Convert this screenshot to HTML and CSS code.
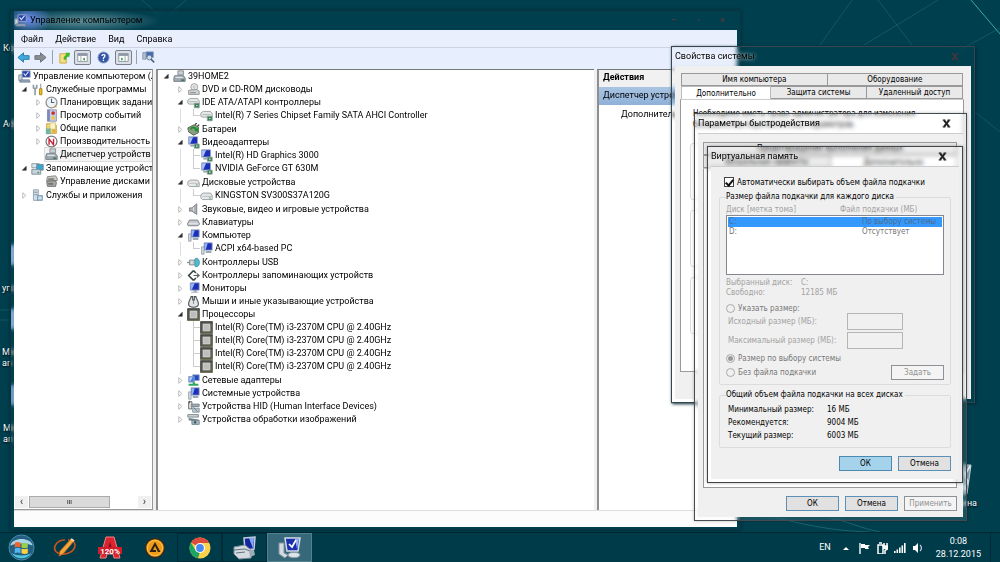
FILE: index.html
```html
<!DOCTYPE html>
<html lang="ru">
<head>
<meta charset="utf-8">
<title>Управление компьютером</title>
<link rel="stylesheet" href="styles.css">
</head>
<body>
<svg class="defs" aria-hidden="true">
  <defs>
    <symbol id="open" viewBox="0 0 8 8"><path d="M6 1.5V6H1.5z" fill="#333" stroke="#222" stroke-width=".6"/></symbol>
    <symbol id="shut" viewBox="0 0 8 8"><path d="M2 .8 5.6 4 2 7.2z" fill="#fff" stroke="#aaa" stroke-width=".9"/></symbol>
    <symbol id="monitor" viewBox="0 0 16 16"><path d="M4 1h11v9H4z" fill="#1c2fb8" stroke="#9aa7b5"/><path d="M4.500 1.500h5L6 9.500H4.500z" fill="#93b4f2"/><path d="M8 10h4v2H8z" fill="#8b98a3"/><path d="M5 12h9v1.500H5z" fill="#b9c3cc"/></symbol>
    <symbol id="video" viewBox="0 0 16 16"><path d="M2 1h11v9H2z" fill="#1c2fb8" stroke="#9aa7b5"/><path d="M2.500 1.500h5L4 9.500H2.500z" fill="#a9c3f5"/><path d="M4 11h6v2H4z" fill="#98a6b4"/><path d="M9 10h6v5H9z" fill="#357a50" stroke="#8aa796"/><path d="M11 11.500h2v2h-2z" fill="#bcd"/></symbol>
    <symbol id="pc" viewBox="0 0 16 16"><path d="M5 1h10v9H5z" fill="#1c2fb8" stroke="#9aa7b5"/><path d="M5.500 1.500h4L7 9.500H5.500z" fill="#93b4f2"/><path d="M2 6h3v9H2z" fill="#d9dfe6" stroke="#8896a5"/><path d="M7 11h7v2.500H7z" fill="#9aa8b5"/></symbol>
    <symbol id="mmc" viewBox="0 0 16 16"><path d="M5 1h10v8H5z" fill="#2440a8" stroke="#a4b2c4"/><path d="m7 4 2 3 4-5" fill="none" stroke="#dbe8ff" stroke-width="1.300"/><path d="M1 6h4v7H1z" fill="#c8d2dd" stroke="#74879b"/><path d="M3 12h11l1 3H2z" fill="#8fa3b8" stroke="#5e7186" stroke-width=".7"/></symbol>
    <symbol id="tools" viewBox="0 0 16 16"><path d="M3 2v4l2 1 2-1V2M5 7v8" fill="none" stroke="#9099a3" stroke-width="2"/><path d="M12 1v6" stroke="#999" stroke-width="1.300"/><path d="M10.500 7h3v7.500h-3z" fill="#f2c21c" stroke="#a87c10"/></symbol>
    <symbol id="clock" viewBox="0 0 16 16"><circle cx="8" cy="8" r="6.700" fill="#eef3f6" stroke="#929292" stroke-width="1.600"/><path d="M8 3.500V8h3.500" fill="none" stroke="#42658a" stroke-width="1.300"/><path d="m12 12 2 2" stroke="#c29534" stroke-width="1.500"/></symbol>
    <symbol id="event" viewBox="0 0 16 16"><path d="M3 1h11v14H3z" fill="#c6d0ec" stroke="#7d87ac"/><path d="M3 1h3v14H3z" fill="#7f89b6"/><circle cx="10" cy="5" r="2.300" fill="#d22e2e"/><path d="M8 9h4v4H8z" fill="#f1c53c"/></symbol>
    <symbol id="folder" viewBox="0 0 16 16"><path d="M2 2h5l1 2h6v10H2z" fill="#f3d77a" stroke="#c69f3c"/><path d="M6 1h7v8H6z" fill="#f8f3ca" stroke="#d1bd6c"/><path d="M1 8h6v7H1z" fill="#76b5a0"/><circle cx="11" cy="11" r="2.500" fill="#dfb148"/></symbol>
    <symbol id="perf" viewBox="0 0 16 16"><circle cx="8" cy="8" r="6.700" fill="#fff" stroke="#777" stroke-width="1.500"/><path d="M5 12V5l5.500 7V4.500" fill="none" stroke="#c5263d" stroke-width="1.700"/></symbol>
    <symbol id="devmgr" viewBox="0 0 16 16"><path d="M6 1h7v5H6z" fill="#c8ced4" stroke="#7b868f"/><path d="M2 7h11l2 3v4H1v-4z" fill="#9faab3" stroke="#69747e"/><path d="M3 9h9" stroke="#eef1f3" stroke-width="1.300"/><path d="M10 11.500h4v2h-4z" fill="#48775c"/></symbol>
    <symbol id="store" viewBox="0 0 16 16"><path d="M1 2h9v5H1z" fill="#dde4ea" stroke="#84919c"/><path d="M7 3h8v7H7z" fill="#38a6cf" stroke="#6b8190"/><path d="M1 9h9l2 2v4H1z" fill="#c6d2dc" stroke="#71828f"/><path d="M8 12h2v2H8z" fill="#37945d"/></symbol>
    <symbol id="diskmgr" viewBox="0 0 16 16"><path d="m3 2 10-1 2 3v3H2z" fill="#c9c9c6" stroke="#777"/><path d="m2 8 11-1 1 3-1 4H3z" fill="#a8a8a4" stroke="#666"/><path d="M4 5h7M4 11h6" stroke="#444" stroke-width="1.200"/></symbol>
    <symbol id="services" viewBox="0 0 16 16"><path d="M3 1h6v13H3z" fill="#d3dde7" stroke="#8899a9"/><path d="M4 4h4M4 7h4" stroke="#6f879c"/><path d="M8 8h6v6H8z" fill="#8fb8cf" stroke="#7797ae"/><path d="M9 10h4M9 12h4" stroke="#fff"/></symbol>
    <symbol id="dvd" viewBox="0 0 16 16"><circle cx="9" cy="5" r="4.300" fill="#e4e7ea" stroke="#999"/><circle cx="9" cy="5" r="1.200" fill="#fff" stroke="#888" stroke-width=".6"/><path d="m2 9 10-1 3 2v4H2z" fill="#d1d4d6" stroke="#888"/><path d="M4 12h7" stroke="#777"/></symbol>
    <symbol id="disk" viewBox="0 0 16 16"><path d="m1 7 3-2h9l2 3v5H3L1 11z" fill="#e5e7e8" stroke="#8d9295"/><path d="M3 9h12" stroke="#aaa" stroke-width=".8"/><path d="M11 11h2" stroke="#4aa04e" stroke-width="1.300"/></symbol>
    <symbol id="ide" viewBox="0 0 16 16"><path d="m1 5 3-2h9l2 3v4H3L1 9z" fill="#e5e9e8" stroke="#90989a"/><path d="M3 7h10" stroke="#aaa"/><path d="M9 9h6v5.500H9z" fill="#348052" stroke="#86a291"/><path d="M11 11h2v1.500h-2z" fill="#bad3c4"/></symbol>
    <symbol id="battery" viewBox="0 0 16 16"><path d="m1 6 8-4 5 3v7l-6 3-6-4z" fill="#8b9b80" stroke="#3f5b3f"/><path d="M4 6c2-2 7-2 8 1l2-1-1 5-4-2 1-1c-2-2-4-1-5 1z" fill="#18902c"/><path d="m10 2 2-2M13 4l2-2" stroke="#333" stroke-width="1.500"/></symbol>
    <symbol id="sound" viewBox="0 0 16 16"><path d="M3 6h3l6-5v13l-6-4H3z" fill="#aeb2b8" stroke="#6e747b"/><path d="M8 5v5" stroke="#e6e7e9"/></symbol>
    <symbol id="keyboard" viewBox="0 0 16 16"><path d="M3 5h10l2.500 5-2 2h-12L.5 10z" fill="#c7cace" stroke="#696f75"/><path d="M2 9.500h12" stroke="#eff1f2"/></symbol>
    <symbol id="usb" viewBox="0 0 16 16"><path d="M0 8h4" stroke="#888" stroke-width="1.500"/><path d="M3 5h7v6H3z" fill="#bcc6ca" stroke="#77858d"/><path d="M10 3h3c3 2 3 8 0 10h-3z" fill="#48bed2" stroke="#498e9c"/><path d="M6 6v4" stroke="#fff"/></symbol>
    <symbol id="ctrl" viewBox="0 0 16 16"><path d="m8 2-6 6 6 6M8 2l3 3M8 14l3-3" fill="none" stroke="#37433a" stroke-width="1.800"/><path d="M8 8h7M12 5.500 15 8l-3 2.500" fill="none" stroke="#5a665d" stroke-width="1.400"/></symbol>
    <symbol id="mouse" viewBox="0 0 16 16"><path d="M5 2c0 2-3 5-3 9s3 4 6 4 6 0 6-4-3-7-3-9H9v4H7V2z" fill="#e1e3e5" stroke="#4b5055" stroke-width="1.300"/><path d="M8 6v5" stroke="#777"/></symbol>
    <symbol id="cpu" viewBox="0 0 16 16"><path d="M1 1h14v14H1z" fill="#666960" stroke="#33362f" stroke-width="1.400"/><path d="M4 4h8v8H4z" fill="#bdbdbd" stroke="#e2e2e2"/><path d="M1 15h14V3" fill="none" stroke="#8a8460"/></symbol>
    <symbol id="net" viewBox="0 0 16 16"><path d="M7 1h8v7H7z" fill="#234bc4" stroke="#92a5bd"/><path d="M2 3h7v7H2z" fill="#4f7de2" stroke="#8ca0ba"/><path d="M3 4h4L4 9H3z" fill="#bcd2fa"/><path d="M7 10h3v2h4v2.500H2V12h5z" fill="#32a663"/></symbol>
    <symbol id="hid" viewBox="0 0 16 16"><path d="M2 2h4v9H2z" fill="#ddd" stroke="#54585c"/><path d="M3 1v3" stroke="#444"/><path d="M6 5h9v3H6z" fill="#9fabb4" stroke="#718089"/><path d="M7 10h8v5H7z" fill="#bdcad4" stroke="#7c8c98"/><path d="m8 9 5 5" stroke="#59656f"/></symbol>
    <symbol id="imaging" viewBox="0 0 16 16"><path d="M1 2h13v3H1z" fill="#d2d8da" stroke="#68757b"/><path d="m2 6 12 2v3L2 9z" fill="#6b8389"/><path d="M6 9h9v5H6z" fill="#adbcc4" stroke="#647984"/><circle cx="10" cy="11.500" r="1.600" fill="#435d6b"/></symbol>
    <symbol id="x" viewBox="0 0 10 10"><path d="M.8 1.300h3M6.200 1.300h3M.8 8.700h3M6.200 8.700h3" stroke="currentColor" stroke-width="1.300"/><path d="m2.300 1.500 5.400 7M7.700 1.500l-5.400 7" stroke="currentColor" stroke-width="2.200"/></symbol>
    <symbol id="start" viewBox="0 0 28 28"><circle cx="14" cy="14" r="13" fill="#235f83" stroke="#4d8fae"/><path d="M2.500 12C4 3 24 3 25.500 12 20 9 8 9 2.500 12z" fill="#a7d5e6"/><path d="M4 20c4 7 16 7 20 0-6 3-14 3-20 0z" fill="#4fc6dd"/><path d="M7 9c2-1 4-1 6 0v5c-2-1-4-1-6 0z" fill="#f0642d"/><path d="M14 9c2 1 4 1 6.500 0v5c-2 1-4 1-6.500 0z" fill="#98d048"/><path d="M7 15c2-1 4-1 6 0v5c-2-1-4-1-6 0z" fill="#53b6ef"/><path d="M14 15c2 1 4 1 6.500 0v5c-2 1-4 1-6.500 0z" fill="#ffd23e"/></symbol>
  </defs>
</svg>

<main class="desktop">
  <svg class="wallpaper" viewBox="0 0 1000 532" preserveAspectRatio="none" aria-hidden="true">
    <g fill="none" stroke="#2c7a84" stroke-width="1">
      <path d="M971 0 1000 34" stroke="#3aa8a8"/>
      <g opacity=".4"><path d="m852 0-32 45M878 0l34 45M938 0l-74 45M1000 28l-40 22M142 0l18 16M186 0l-14 12M975 112l25 20M0 310h10M0 320h10"/></g>
      <path d="M740 512c50 6 70 18 130 20M830 518c20 4 30 10 50 14" opacity=".6"/>
    </g>
  </svg>
  <div class="shortcut s1">Корзина</div>
  <div class="shortcut s2">Adobe</div>
  <div class="shortcut s3 pic">угол</div>
  <div class="shortcut s4 pic">Micro<br>an</div>
  <div class="shortcut s5 pic">Micro<br>an</div>
  <div class="bin">
    <svg viewBox="0 0 30 34"><path d="M2 3h25l-4 29H6z" fill="#7e9dab" stroke="#c3d3da"/><path d="m6 3 4 10 6-9 5 9 5-9M8 28l6-10 7 10M21 14l3 5-3 9" fill="none" stroke="#eaf2f5" stroke-width="1.600"/></svg>
    <span>Корзина</span>
  </div>

  <section class="window console">
    <header class="titlebar">
      <svg class="i"><use href="#mmc"/></svg><h1>Управление компьютером</h1>
      <div class="caption"><button aria-label="Свернуть">–</button><button aria-label="Развернуть">▫</button><button aria-label="Закрыть">×</button></div>
    </header>
    <div class="client">
      <nav class="menu"><button>Файл</button><button>Действие</button><button>Вид</button><button>Справка</button></nav>
      <div class="toolbar">
        <button aria-label="Назад"><svg viewBox="0 0 14 14"><path d="m1 7 6-5v3h6v4H7v3z" fill="#3fa9dc" stroke="#2379a9"/></svg></button>
        <button aria-label="Вперёд"><svg viewBox="0 0 14 14"><path d="M13 7 7 2v3H1v4h6v3z" fill="#8a8f94" stroke="#686d72"/></svg></button>
        <i class="sep"></i>
        <button aria-label="Вверх"><svg viewBox="0 0 14 14"><path d="M2 3h7v10H2z" fill="#f5df83" stroke="#cba944"/><path d="M6 9c0-3 1-4 3-5L8 2l5 0-1 5-1-1c-2 1-2 2-3 4z" fill="#45b52c"/></svg></button>
        <button class="on" aria-label="Дерево консоли"><svg viewBox="0 0 14 14"><path d="M1 2h12v10H1z" fill="#fff" stroke="#7d8894"/><path d="M1 2h12v3H1z" fill="#8d99a6"/><path d="M5 5v7" stroke="#8d99a6"/><path d="m10 7-3 2 3 2z" fill="#3b9c4b"/></svg></button>
        <button class="help" aria-label="Справка"><svg viewBox="0 0 14 14"><circle cx="7" cy="7" r="6" fill="#3356a8" stroke="#9aa9c8"/><text x="7" y="10.500" text-anchor="middle" class="q">?</text></svg></button>
        <button class="on" aria-label="Панель действий"><svg viewBox="0 0 14 14"><path d="M1 2h12v10H1z" fill="#fff" stroke="#7d8894"/><path d="M1 2h12v3H1z" fill="#8d99a6"/><path d="M9 5v7" stroke="#8d99a6"/><path d="m4 7 3 2-3 2z" fill="#3b9c4b"/></svg></button>
        <i class="sep"></i>
        <button aria-label="Обновить"><svg viewBox="0 0 16 16"><path d="M1 2h4v8H1z" fill="#b6c3d2" stroke="#7a8a9c"/><path d="M5 1h9v7H5z" fill="#4669ae" stroke="#8ea3bd"/><circle cx="9" cy="8" r="3" fill="#cfe0ee" stroke="#586e86"/><path d="m11 10 4 4" stroke="#54667a" stroke-width="2"/></svg></button>
      </div>
      <div class="panes">
        <div class="pane scope">
          <ul class="tree">
            <li class="row l0 bare"><svg class="i"><use href="#mmc"/></svg>Управление компьютером (локальным)</li>
            <li><div class="row l1"><svg class="t"><use href="#open"/></svg><svg class="i"><use href="#tools"/></svg>Служебные программы</div>
              <ul class="group">
                <li class="row l2"><svg class="t"><use href="#shut"/></svg><svg class="i"><use href="#clock"/></svg>Планировщик заданий</li>
                <li class="row l2"><svg class="t"><use href="#shut"/></svg><svg class="i"><use href="#event"/></svg>Просмотр событий</li>
                <li class="row l2"><svg class="t"><use href="#shut"/></svg><svg class="i"><use href="#folder"/></svg>Общие папки</li>
                <li class="row l2"><svg class="t"><use href="#shut"/></svg><svg class="i"><use href="#perf"/></svg>Производительность</li>
                <li class="row l2 bare selected"><svg class="i"><use href="#devmgr"/></svg>Диспетчер устройств</li>
              </ul></li>
            <li><div class="row l1"><svg class="t"><use href="#open"/></svg><svg class="i"><use href="#store"/></svg>Запоминающие устройства</div>
              <ul class="group"><li class="row l2 bare"><svg class="i"><use href="#diskmgr"/></svg>Управление дисками</li></ul></li>
            <li class="row l1"><svg class="t"><use href="#shut"/></svg><svg class="i"><use href="#services"/></svg>Службы и приложения</li>
          </ul>
          <div class="scroll"><button aria-label="Влево">‹</button><i class="thumb">III</i><button aria-label="Вправо">›</button></div>
        </div>
        <div class="pane devices">
          <ul class="tree">
            <li class="row l0"><svg class="t"><use href="#open"/></svg><svg class="i"><use href="#devmgr"/></svg>39HOME2</li>
            <li class="row l1"><svg class="t"><use href="#shut"/></svg><svg class="i"><use href="#dvd"/></svg>DVD и CD-ROM дисководы</li>
            <li><div class="row l1"><svg class="t"><use href="#open"/></svg><svg class="i"><use href="#ide"/></svg>IDE ATA/ATAPI контроллеры</div>
              <ul class="group"><li class="row l2"><svg class="i"><use href="#ide"/></svg>Intel(R) 7 Series Chipset Family SATA AHCI Controller</li></ul></li>
            <li class="row l1"><svg class="t"><use href="#shut"/></svg><svg class="i"><use href="#battery"/></svg>Батареи</li>
            <li><div class="row l1"><svg class="t"><use href="#open"/></svg><svg class="i"><use href="#video"/></svg>Видеоадаптеры</div>
              <ul class="group"><li class="row l2"><svg class="i"><use href="#video"/></svg>Intel(R) HD Graphics 3000</li><li class="row l2"><svg class="i"><use href="#video"/></svg>NVIDIA GeForce GT 630M</li></ul></li>
            <li><div class="row l1"><svg class="t"><use href="#open"/></svg><svg class="i"><use href="#disk"/></svg>Дисковые устройства</div>
              <ul class="group"><li class="row l2"><svg class="i"><use href="#disk"/></svg>KINGSTON SV300S37A120G</li></ul></li>
            <li class="row l1"><svg class="t"><use href="#shut"/></svg><svg class="i"><use href="#sound"/></svg>Звуковые, видео и игровые устройства</li>
            <li class="row l1"><svg class="t"><use href="#shut"/></svg><svg class="i"><use href="#keyboard"/></svg>Клавиатуры</li>
            <li><div class="row l1"><svg class="t"><use href="#open"/></svg><svg class="i"><use href="#pc"/></svg>Компьютер</div>
              <ul class="group"><li class="row l2"><svg class="i"><use href="#pc"/></svg>ACPI x64-based PC</li></ul></li>
            <li class="row l1"><svg class="t"><use href="#shut"/></svg><svg class="i"><use href="#usb"/></svg>Контроллеры USB</li>
            <li class="row l1"><svg class="t"><use href="#shut"/></svg><svg class="i"><use href="#ctrl"/></svg>Контроллеры запоминающих устройств</li>
            <li class="row l1"><svg class="t"><use href="#shut"/></svg><svg class="i"><use href="#monitor"/></svg>Мониторы</li>
            <li class="row l1"><svg class="t"><use href="#shut"/></svg><svg class="i"><use href="#mouse"/></svg>Мыши и иные указывающие устройства</li>
            <li><div class="row l1"><svg class="t"><use href="#open"/></svg><svg class="i"><use href="#cpu"/></svg>Процессоры</div>
              <ul class="group"><li class="row l2"><svg class="i"><use href="#cpu"/></svg>Intel(R) Core(TM) i3-2370M CPU @ 2.40GHz</li><li class="row l2"><svg class="i"><use href="#cpu"/></svg>Intel(R) Core(TM) i3-2370M CPU @ 2.40GHz</li><li class="row l2"><svg class="i"><use href="#cpu"/></svg>Intel(R) Core(TM) i3-2370M CPU @ 2.40GHz</li><li class="row l2"><svg class="i"><use href="#cpu"/></svg>Intel(R) Core(TM) i3-2370M CPU @ 2.40GHz</li></ul></li>
            <li class="row l1"><svg class="t"><use href="#shut"/></svg><svg class="i"><use href="#net"/></svg>Сетевые адаптеры</li>
            <li class="row l1"><svg class="t"><use href="#shut"/></svg><svg class="i"><use href="#pc"/></svg>Системные устройства</li>
            <li class="row l1"><svg class="t"><use href="#shut"/></svg><svg class="i"><use href="#hid"/></svg>Устройства HID (Human Interface Devices)</li>
            <li class="row l1"><svg class="t"><use href="#shut"/></svg><svg class="i"><use href="#imaging"/></svg>Устройства обработки изображений</li>
          </ul>
        </div>
        <div class="pane actions">
          <h2>Действия</h2>
          <h3>Диспетчер устройств</h3>
          <p>Дополнительные действия</p>
        </div>
      </div>
      <footer class="status"></footer>
    </div>
  </section>

  <section class="window dialog system">
    <header class="titlebar"><h1>Свойства системы</h1><button class="close" aria-label="Закрыть"><svg><use href="#x"/></svg></button></header>
    <div class="body">
      <div class="tabs back"><button>Имя компьютера</button><button>Оборудование</button></div>
      <div class="tabs front"><button class="current">Дополнительно</button><button>Защита системы</button><button>Удаленный доступ</button></div>
      <div class="sheet">
        <p>Необходимо иметь права администратора для изменения большинства перечисленных параметров.</p>
        <div class="box"></div><div class="box"></div><div class="box"></div>
      </div>
    </div>
  </section>

  <section class="window dialog perf">
    <header class="titlebar"><h1>Параметры быстродействия</h1><button class="close" aria-label="Закрыть"><svg><use href="#x"/></svg></button></header>
    <div class="body">
      <div class="tabs back"><button>Предотвращение выполнения данных</button></div>
      <div class="tabs front"><button>Визуальные эффекты</button><button class="current">Дополнительно</button></div>
      <div class="sheet"></div>
      <div class="buttons"><button class="btn">ОК</button><button class="btn">Отмена</button><button class="btn" disabled>Применить</button></div>
    </div>
  </section>

  <section class="window dialog memory">
    <header class="titlebar"><h1>Виртуальная память</h1><button class="close" aria-label="Закрыть"><svg><use href="#x"/></svg></button></header>
    <form class="body">
      <label class="check"><input type="checkbox" checked>Автоматически выбирать объем файла подкачки</label>
      <fieldset>
        <legend>Размер файла подкачки для каждого диска</legend>
        <table class="drives">
          <thead><tr><th>Диск [метка тома]</th><th>Файл подкачки (МБ)</th></tr></thead>
          <tbody><tr class="picked"><td>C:</td><td>По выбору системы</td></tr><tr><td>D:</td><td>Отсутствует</td></tr></tbody>
        </table>
        <dl class="info"><dt>Выбранный диск:</dt><dd>C:</dd><dt>Свободно:</dt><dd>12185 МБ</dd></dl>
        <label class="radio"><input type="radio" name="size" disabled>Указать размер:</label>
        <div class="sizes">
          <label for="min">Исходный размер (МБ):</label><input id="min" type="text" disabled>
          <label for="max">Максимальный размер (МБ):</label><input id="max" type="text" disabled>
        </div>
        <label class="radio"><input type="radio" name="size" checked disabled>Размер по выбору системы</label>
        <div class="last"><label class="radio"><input type="radio" name="size" disabled>Без файла подкачки</label><button type="button" class="btn" disabled>Задать</button></div>
      </fieldset>
      <fieldset class="totals">
        <legend>Общий объем файла подкачки на всех дисках</legend>
        <dl><dt>Минимальный размер:</dt><dd>16 МБ</dd><dt>Рекомендуется:</dt><dd>9004 МБ</dd><dt>Текущий размер:</dt><dd>6003 МБ</dd></dl>
      </fieldset>
      <div class="buttons"><button type="button" class="btn primary">ОК</button><button type="button" class="btn">Отмена</button></div>
    </form>
  </section>
</main>

<footer class="taskbar">
  <div class="launch">
    <button aria-label="Пуск"><svg class="orb"><use href="#start"/></svg></button>
    <button aria-label="Рисование"><svg viewBox="0 0 24 24"><path d="M12 4C3 4-2 13 5 17c7 3 17-1 17-8 0-3-3-5-7-5" fill="none" stroke="#c5541d" stroke-width="1.600"/><path d="M7 15 18 3l3 2L10 18l-4 2z" fill="#f4a53b" stroke="#b4631d"/><path d="m18 3 3 2" stroke="#f7d8bd" stroke-width="2"/></svg></button>
    <button aria-label="Alcohol 120%"><svg viewBox="0 0 24 24"><path d="M8 1h8l6 21h-6l-1-4H9l-1 4H2z" fill="#dc2430" stroke="#f1837d"/><path d="m12 6 2 6h-4z" fill="#7a1220"/><path d="M0 11h24v7H0z" fill="#d11c29"/><text x="12" y="17.500" text-anchor="middle" class="proof">120%</text></svg></button>
    <button aria-label="AIMP"><svg viewBox="0 0 24 24"><circle cx="12" cy="12" r="9.500" fill="#f09b18" stroke="#332b22" stroke-width="1.500"/><circle cx="12" cy="12" r="7.600" fill="none" stroke="#ffc44d"/><path d="m12 6 5.500 10H15l-3-6-2 4h3v2H6.500z" fill="#2b2118"/></svg></button>
    <button class="task" aria-label="Chrome"><svg viewBox="0 0 24 24"><circle cx="12" cy="12" r="10.500" fill="#fbd14b"/><path d="M12 12 3 6.500a10.500 10.500 0 0 1 18.200.5H12z" fill="#dd4b3e"/><path d="M3 6.500 8 15l4 1-2 6.300A10.500 10.500 0 0 1 3 6.500z" fill="#1da462"/><circle cx="12" cy="12" r="5" fill="#fff"/><circle cx="12" cy="12" r="3.900" fill="#4688f1"/></svg></button>
    <button class="task" aria-label="Система"><svg viewBox="0 0 24 24"><path d="m11 2 11-1-1 12-9 1z" fill="#1525a0" stroke="#c5d0dc" stroke-width="1.500"/><path d="m16 2 5-.500-1 11z" fill="#86a8f0"/><path d="m1 11 11-2 7 6-1 7-12 1-5-5z" fill="#d3dae0" stroke="#7e8e9c"/><path d="m1 14 11-1 7 3M3 17l9-1" fill="none" stroke="#62727f"/><path d="m16 14 5 0 1 5-5 2z" fill="#9cabb7"/></svg></button>
    <button class="task active" aria-label="Управление компьютером"><svg viewBox="0 0 24 24"><path d="M7 2h15l-2 13H9z" fill="#1a2fae" stroke="#d3dde7" stroke-width="1.500"/><path d="m17 3 4 0-2 10z" fill="#8daef2"/><path d="m11 8 3 3 4-7" fill="none" stroke="#fff" stroke-width="1.700"/><path d="M1 7h5v10l4 2-3 3-6-4z" fill="#d3dae1" stroke="#8292a0"/><ellipse cx="16" cy="19" rx="6" ry="2.700" fill="#dce3e9" stroke="#8b99a6"/></svg></button>
  </div>
  <div class="tray">
    <span class="lang">EN</span>
    <svg viewBox="0 0 12 12"><path d="m6 5 3 3H3z" fill="#fff"/></svg>
    <svg viewBox="0 0 12 12"><path d="M2 1v11" stroke="#fff" stroke-width="1.400"/><path d="M3 2h4v1h5l-2 2 1 2H7V6H3z" fill="#fff"/></svg>
    <svg viewBox="0 0 12 12"><path d="M2 3h5v9H2z" fill="none" stroke="#fff" stroke-width="1.500"/><path d="M3 1h3M8 1v3M11 1v3M6.500 4h5v3L9 8.500V12" fill="none" stroke="#fff" stroke-width="1.500"/><path d="M7 4h5v3H7z" fill="#fff"/></svg>
    <svg viewBox="0 0 12 12"><path d="M0 9h1.600v2H0zm2.500-1.500h1.600V11H2.500zM5 5.500h1.600V11H5zm2.500-2h1.600V11H7.500zM10 1h1.600v10H10z" fill="#fff"/></svg>
    <svg viewBox="0 0 12 12"><path d="M1 4h2l3-3v10L3 8H1z" fill="#fff"/><path d="M8 3c2 2 2 4 0 6" fill="none" stroke="#bcd" stroke-width="1.200"/></svg>
    <time>0:08<br>28.12.2015</time>
    <button class="peek" aria-label="Свернуть все окна"></button>
  </div>
</footer>
</body>
</html>
```
FILE: styles.css
```css
* { box-sizing: border-box; }

:root {
  --ui: Roboto, "Noto Sans", sans-serif;
  --dlg: "DejaVu Sans Condensed", "DejaVu Sans", sans-serif;
  --face: #f0f0f0;
  --teal: #003f4e;
}

body {
  margin: 0;
  height: 100vh;
  display: flex;
  flex-direction: column;
  overflow: hidden;
  background: var(--teal);
  color: #000;
  font: 9px/13px var(--ui);
}

button, input { font: inherit; color: inherit; margin: 0; padding: 0; border: 0; background: none; }
h1, h2, h3, p, ul, dl, dd { margin: 0; padding: 0; font-size: inherit; font-weight: normal; }
ul { list-style: none; }
.defs { position: absolute; width: 0; height: 0; }

/* Desktop */
.desktop { position: relative; flex: 1; min-height: 0; overflow: hidden; }
.wallpaper { position: absolute; inset: 0; width: 100%; height: 100%; }
.shortcut { position: absolute; color: #fff; line-height: 11px; text-shadow: 0 1px 2px #000; }
.pic::before { content: ""; position: absolute; left: 8px; bottom: 100%; width: 24px; height: 20px; margin-bottom: 18px; background: #7fa8cf; }
.s1 { left: 3px; top: 43px; }
.s2 { left: 3px; top: 119px; }
.s3 { left: 2px; top: 283px; }
.s4 { left: 2px; top: 347px; }
.s5 { left: 3px; top: 423px; }
.bin { position: absolute; right: 2.300%; top: 461px; display: flex; flex-direction: column; align-items: center; color: #fff; text-shadow: 0 1px 2px #000; }
.bin svg { width: 30px; height: 36px; }

/* Windows */
.window { position: absolute; border: 1px solid #16323d; backdrop-filter: blur(2px); display: flex; flex-direction: column; }
.titlebar { display: flex; align-items: center; height: 19px; }
.console { left: 1%; top: 10px; right: 25.900%; bottom: 2px; padding: 0 3px 2px; box-shadow: 0 0 3px #00252f; border-color: #0b3542; }
.console .titlebar { flex: none; background: radial-gradient(24px 16px at 14px 8px, #6f8cf0, transparent), radial-gradient(80px 12px at 68px 10px, #5f8f99, transparent); }
.console .titlebar .i { margin-right: 3px; }
.caption { margin-left: auto; display: flex; gap: 20px; padding-right: 12px; color: #513a40; font-weight: bold; }
.client { flex: 1; min-height: 0; display: flex; flex-direction: column; background: var(--face); }
.menu { display: flex; gap: 12px; padding: 2px 7px; height: 18px; background: #e9effd; border-bottom: 1px solid #cdd3e0; }
.menu button { line-height: 14px; }
.toolbar { display: flex; align-items: center; gap: 2px; height: 21px; padding: 0 2px 3px; background: #e7eefd; }
.toolbar button { width: 15px; height: 15px; padding: 1px; display: grid; }
.toolbar button svg { width: 13px; height: 13px; }
.toolbar .help { margin: 0 2px 0 3px; }
.toolbar .on { width: 17px; border: 1px solid #7b8088; border-radius: 2px; background: #dbe0e8; }
.toolbar .on svg { height: 11px; }
.toolbar .sep { width: 1px; height: 14px; margin: 0 2px; background: #999fac; }
.q { font: bold 10px var(--ui); fill: #fff; }

.panes { flex: 1; min-height: 0; display: grid; grid-template-columns: 139px minmax(0, 438px) minmax(0, 1fr); gap: 3px; }
.pane { background: #fff; border-top: 1px solid #777; overflow: hidden; }
.scope { display: flex; flex-direction: column; justify-content: space-between; border-right: 1px solid #999; border-bottom: 1px solid #999; }
.devices { border-left: 2px solid #8d8f92; }
.actions { border-left: 2px solid #8d8f92; }
.status { height: 17px; background: #fdfcfd; border-top: 1px solid #ddd; }

.i { width: 13px; height: 13px; flex: none; margin-right: 2px; }
.t { width: 7px; height: 7px; flex: none; margin-right: 3px; }
.row { display: flex; align-items: center; height: 13px; white-space: nowrap; }
.group { padding-bottom: 1px; }
.scope .l0 { padding-left: 4px; }
.scope .l1 { padding-left: 7px; }
.scope .l2 { padding-left: 21px; }
.scope .l2.bare { padding-left: 0; margin-left: 31px; }
.selected { background: #f3f3f3; box-shadow: 0 0 0 1px #ddd; }
.devices .l0 { padding-left: 5px; }
.devices .l1 { padding-left: 19px; }
.devices .l2 { padding-left: 42px; background: linear-gradient(#ccc, #ccc) 35px 0 / 1px 100% no-repeat, linear-gradient(#ccc, #ccc) 35px 6px / 7px 1px no-repeat; }
.devices .l2:last-child { background-size: 1px 6px, 7px 1px; }
.devices .group { background: linear-gradient(#ddd, #ddd) 22px 0 / 1px 100% no-repeat; }

.scroll { display: flex; align-items: stretch; height: 13px; padding: 0 1px 1px; }
.scroll button { width: 13px; background: #f0f0f0; font: bold 11px/8px var(--ui); color: #555; }
.scroll .thumb { width: 81px; margin: 0 auto 0 1px; border: 1px solid #aaa; background: #dadada; font: 6px/9px var(--ui); text-align: center; }

.actions h2 { padding: 1px 4px; height: 17px; background: #f1f1f1; font-weight: bold; }
.actions h3 { padding: 2px 4px; height: 18px; background: linear-gradient(#a9c4e3, #8fb1d8); white-space: nowrap; }
.actions p { padding: 3px 22px; white-space: nowrap; }

/* Dialogs */
.dialog { padding: 0 3px 3px; }
.dialog .titlebar h1 { font-size: 9px; text-shadow: 0 0 4px #fff; }
.dialog .titlebar { justify-content: space-between; }
.dialog .body { background: var(--face); font: 8px/11px var(--dlg); color: #000; }
.close { display: grid; }
.close svg { width: 9px; height: 9px; color: #222; }
.tabs { display: flex; }
.tabs button { flex: 1; height: 13px; border: 1px solid #999; background: #e9e9e9; line-height: 11px; }
.tabs button + button { border-left: 0; }
.tabs .current { background: #fff; border-color: #bbb; border-bottom: 0; }
.sheet { background: #fff; border: 1px solid #999; border-top-color: #ccc; }

.system { left: 67.100%; top: 46px; width: 304px; box-shadow: 1px 1px 3px #00252f; border-color: #34474f; }
.system .close svg { color: #45353d; width: 8px; }
.system .close { margin-right: 12px; }
.system .body { padding: 7px 7px 27px 5px; }
.system .tabs { padding: 0 1px; }
.system .tabs button:first-child { flex: 0 0 52%; }
.system .front button { flex: 1 1 0; }
.system .front button:first-child { flex: 0 0 90px; }
.system .sheet { padding: 8px 9px; min-height: 273px; display: flex; flex-direction: column; gap: 10px; }
.system .sheet p { margin-bottom: 3px; padding-left: 3px; }
.box { height: 57px; border: 1px solid #ddd; border-radius: 3px; }

.perf { left: 69.400%; top: 113px; width: 273px; border-color: #454c50; background: rgb(255 255 255 / 10%); box-shadow: 0 0 3px #0004; }
.perf .titlebar, .memory .titlebar { padding-right: 12px; }
.perf .body { padding: 8px 6px 6px 5px; border-top: 1px solid #ccc; }
.perf .sheet { min-height: 320px; }
.perf .front button { flex: 1 1 0; }

.memory { left: 70.700%; top: 146px; width: 256px; border-color: #3f4549; background: rgb(255 255 255 / 10%); box-shadow: 0 0 3px #0005; }
.memory .body { padding: 10px 8px 8px; border-top: 1px solid #ccc; }
.check, .radio { display: flex; align-items: center; gap: 3px; height: 10px; white-space: nowrap; }
.check { padding-left: 5px; }
.check input { appearance: none; width: 10px; height: 10px; border: 1px solid #444; background: #fff; display: grid; place-items: center; }
.check input:checked::before { content: ""; width: 3px; height: 6px; margin-bottom: 2px; border: solid #111; border-width: 0 2px 2px 0; rotate: 40deg; }
.radio { color: #777; }
.radio input { appearance: none; width: 9px; height: 9px; border: 1px solid #aaa; border-radius: 50%; display: grid; place-items: center; }
.radio input:checked::before { content: ""; width: 5px; height: 5px; border-radius: 50%; background: #999; }

fieldset { margin: 5px 0 0; padding: 2px 6px 4px; min-width: 0; border: 1px solid #dcdcdc; border-radius: 2px; }
legend { padding: 0 2px 0 0; line-height: 10px; }
.drives { display: block; color: #777; }
.drives thead, .drives tbody { display: block; }
.drives tr { display: grid; grid-template-columns: 133px 1fr; line-height: 10px; }
.drives th { padding: 0; font-weight: normal; text-align: left; color: #a2a2a2; }
.drives thead tr { grid-template-columns: 114px 1fr; line-height: 11px; }
.drives tbody { height: 60px; padding: 1px; border: 1px solid #828790; background: #fff; }
.drives td { padding: 0 1px; }
.picked { background: #3399ff; color: #4e6d8c; }
.info { display: grid; grid-template-columns: 75px 1fr; margin: 3px 0 5px; line-height: 10px; color: #a2a2a2; }
.sizes { display: grid; grid-template-columns: 119px 56px; gap: 2px 0; margin-bottom: 4px; padding-left: 2px; align-items: center; color: #a2a2a2; white-space: nowrap; }
.sizes input { height: 17px; width: 100%; border: 1px solid #b5b5b5; }
.last { display: flex; align-items: center; justify-content: space-between; margin-top: 2px; }
.totals { padding: 3px 8px 5px; }
.totals legend { margin-left: -2px; }
.totals dl { display: grid; grid-template-columns: 99px 1fr; line-height: 13px; }

.buttons { display: flex; justify-content: flex-end; gap: 6px; margin-top: 8px; }
.btn { width: 53px; height: 15px; border: 1px solid #5b8fb5; background: #e1e1e1; line-height: 13px; }
.btn:disabled { border-color: #8d9296; background: #f4f4f4; color: #909090; }
.btn.primary { background: #a6d3ec; border-color: #4a8ab0; }

/* Taskbar */
.taskbar { flex: none; height: 30px; display: flex; justify-content: space-between; background: #003b4a; border-top: 1px solid #002631; color: #fff; }
.launch { display: flex; align-items: center; }
.launch button { width: 45px; height: 29px; display: grid; place-items: center; }
.launch button:first-child { width: 42px; }
.launch svg { width: 24px; height: 24px; }
.launch .orb { width: 27px; height: 27px; }
.launch .task { border: 1px solid #002a36; }
.launch .active { background: #35697a; border-color: #51818f; }
.proof { font: bold 8px var(--ui); fill: #fff; }
.tray { display: flex; align-items: center; gap: 6px; }
.tray svg { width: 12px; height: 12px; }
.tray .lang { margin-right: 3px; }
.tray time { margin: 0 3px 0 6px; text-align: center; }
.peek { width: 10px; height: 29px; border-left: 1px solid #002a36; }
```
